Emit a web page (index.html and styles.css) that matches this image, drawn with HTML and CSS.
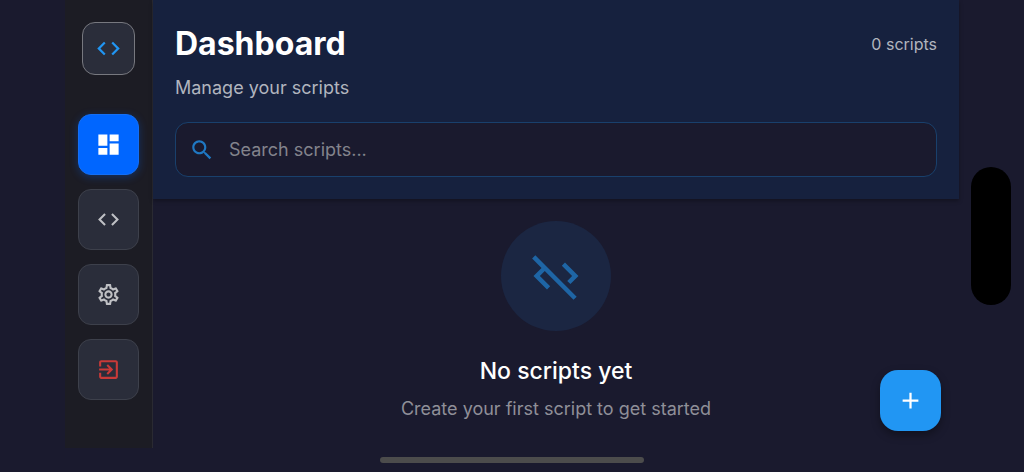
FILE: index.html
```html
<!DOCTYPE html>
<html lang="en">
<head>
<meta charset="utf-8">
<meta name="viewport" content="width=device-width, initial-scale=1">
<title>Dashboard</title>
<link rel="stylesheet" href="styles.css">
</head>
<body>
<div class="app">
  <aside class="sidebar">
    <div class="logo">
      <svg class="icon icon-large" viewBox="0 0 24 24" aria-hidden="true"><path d="M9.4 16.6L4.8 12l4.6-4.6L8 6l-6 6 6 6 1.4-1.4zm5.2 0l4.6-4.6-4.6-4.6L16 6l6 6-6 6-1.4-1.4z"/></svg>
    </div>
    <nav class="nav">
      <button class="nav-button active" type="button" aria-label="Dashboard">
        <svg class="icon icon-large" viewBox="0 0 24 24" aria-hidden="true"><path d="M3 13h8V3H3v10zm0 8h8v-6H3v6zm10 0h8V11h-8v10zm0-18v6h8V3h-8z"/></svg>
      </button>
      <button class="nav-button" type="button" aria-label="Scripts">
        <svg class="icon" viewBox="0 0 24 24" aria-hidden="true"><path d="M9.4 16.6L4.8 12l4.6-4.6L8 6l-6 6 6 6 1.4-1.4zm5.2 0l4.6-4.6-4.6-4.6L16 6l6 6-6 6-1.4-1.4z"/></svg>
      </button>
      <button class="nav-button" type="button" aria-label="Settings">
        <svg class="icon" viewBox="0 0 24 24" aria-hidden="true"><path d="M19.43 12.98c.04-.32.07-.64.07-.98 0-.34-.03-.66-.07-.98l2.11-1.65c.19-.15.24-.42.12-.64l-2-3.46c-.09-.16-.26-.25-.44-.25-.06 0-.12.01-.17.03l-2.49 1c-.52-.4-1.08-.73-1.69-.98l-.38-2.65C14.46 2.18 14.25 2 14 2h-4c-.25 0-.46.18-.49.42l-.38 2.65c-.61.25-1.17.59-1.69.98l-2.49-1c-.06-.02-.12-.03-.18-.03-.17 0-.34.09-.43.25l-2 3.46c-.13.22-.07.49.12.64l2.11 1.65c-.04.32-.07.65-.07.98s.03.66.07.98l-2.11 1.65c-.19.15-.24.42-.12.64l2 3.46c.09.16.26.25.44.25.06 0 .12-.01.17-.03l2.49-1c.52.4 1.08.73 1.69.98l.38 2.65c.03.24.24.42.49.42h4c.25 0 .46-.18.49-.42l.38-2.65c.61-.25 1.17-.59 1.69-.98l2.49 1c.06.02.12.03.18.03.17 0 .34-.09.43-.25l2-3.46c.12-.22.07-.49-.12-.64l-2.11-1.65zm-1.98-1.71c.04.31.05.52.05.73 0 .21-.02.43-.05.73l-.14 1.13.89.7 1.08.84-.7 1.21-1.27-.51-1.04-.42-.9.68c-.43.32-.84.56-1.25.73l-1.06.43-.16 1.13-.2 1.35h-1.4l-.19-1.35-.16-1.13-1.06-.43c-.43-.18-.83-.41-1.23-.71l-.91-.7-1.06.43-1.27.51-.7-1.21 1.08-.84.89-.7-.14-1.13c-.03-.31-.05-.54-.05-.74s.02-.43.05-.73l.14-1.13-.89-.7-1.08-.84.7-1.21 1.27.51 1.04.42.9-.68c.43-.32.84-.56 1.25-.73l1.06-.43.16-1.13.2-1.35h1.39l.19 1.35.16 1.13 1.06.43c.43.18.83.41 1.23.71l.91.7 1.06-.43 1.27-.51.7 1.21-1.07.85-.89.7.14 1.13zM12 8c-2.21 0-4 1.79-4 4s1.79 4 4 4 4-1.79 4-4-1.79-4-4-4zm0 6c-1.1 0-2-.9-2-2s.9-2 2-2 2 .9 2 2-.9 2-2 2z"/></svg>
      </button>
      <button class="nav-button danger" type="button" aria-label="Sign out">
        <svg class="icon" viewBox="0 0 24 24" aria-hidden="true"><path d="M10.09 15.59L11.5 17l5-5-5-5-1.41 1.41L12.67 11H3v2h9.67l-2.58 2.59zM19 3H5c-1.11 0-2 .9-2 2v4h2V5h14v14H5v-4H3v4c0 1.1.89 2 2 2h14c1.1 0 2-.9 2-2V5c0-1.1-.9-2-2-2z"/></svg>
      </button>
    </nav>
  </aside>
  <main class="main">
    <header class="header">
      <div class="title-row">
        <h1 class="title">Dashboard</h1>
        <span class="count">0 scripts</span>
      </div>
      <p class="subtitle">Manage your scripts</p>
      <label class="search">
        <svg class="icon icon-search" viewBox="0 0 24 24" aria-hidden="true"><path d="M15.5 14h-.79l-.28-.27C15.41 12.59 16 11.11 16 9.5 16 5.91 13.09 3 9.5 3S3 5.91 3 9.5 5.91 16 9.5 16c1.61 0 3.09-.59 4.23-1.57l.27.28v.79l5 4.99L20.49 19l-4.99-5zm-6 0C7.01 14 5 11.99 5 9.5S7.01 5 9.5 5 14 7.01 14 9.5 11.99 14 9.5 14z"/></svg>
        <input class="search-input" type="text" placeholder="Search scripts..." aria-label="Search scripts">
      </label>
    </header>
    <section class="empty">
      <div class="empty-badge">
        <svg class="icon icon-empty" viewBox="0 0 24 24" aria-hidden="true"><path d="M19.17 12l-4.58-4.59L16 6l6 6-3.59 3.59L17 14.17 19.17 12zM1.39 4.22l4.19 4.19L2 12l6 6 1.41-1.41L4.83 12 7 9.83l12.78 12.78 1.41-1.41L2.81 2.81 1.39 4.22z"/></svg>
      </div>
      <h2 class="empty-title">No scripts yet</h2>
      <p class="empty-text">Create your first script to get started</p>
    </section>
    <button class="fab" type="button" aria-label="New script">
      <svg class="icon icon-large" viewBox="0 0 24 24" aria-hidden="true"><path d="M19 13h-6v6h-2v-6H5v-2h6V5h2v6h6v2z"/></svg>
    </button>
  </main>
</div>
<div class="camera"></div>
<div class="home-indicator"></div>
</body>
</html>
```
FILE: styles.css
```css
* {
  box-sizing: border-box;
}

body {
  margin: 0;
  background: #1a1a2e;
  color: #fff;
  font-family: Inter, "Liberation Sans", sans-serif;
}

h1, h2, p {
  margin: 0;
}

button {
  padding: 0;
  font: inherit;
  cursor: pointer;
}

.app {
  display: flex;
  min-height: 100vh;
  padding: 0 65px 24px;
}

.icon {
  display: block;
  width: 25px;
  height: 25px;
  fill: currentColor;
}

.icon-search {
  width: 26px;
  height: 26px;
}

.icon-large {
  width: 27px;
  height: 27px;
}

.icon-empty {
  width: 54px;
  height: 54px;
}

.sidebar {
  display: flex;
  flex-direction: column;
  align-items: center;
  gap: 39px;
  flex: 0 0 88px;
  padding: 22px 0;
  background: #1c1c24;
  border-right: 1px solid #2a2a32;
}

.logo {
  display: grid;
  place-items: center;
  width: 53px;
  height: 53px;
  background: #2a2d3a;
  border: 1px solid #77787f;
  border-radius: 13px;
  color: #2196f3;
}

.nav {
  display: grid;
  gap: 14px;
}

.nav-button {
  display: grid;
  place-items: center;
  width: 61px;
  height: 61px;
  background: #2a2d3a;
  border: 1px solid #3d404b;
  border-radius: 13px;
  color: #bfc0c4;
}

.nav-button.active {
  background: #0066ff;
  border-color: #146ff5;
  color: #fff;
  box-shadow: 0 2px 9px rgba(0, 102, 255, 0.3);
}

.nav-button.danger {
  color: #c93a38;
}

.main {
  position: relative;
  display: flex;
  flex-direction: column;
  flex: 1;
  min-width: 0;
}

.header {
  padding: 22px;
  background: #16213e;
  box-shadow: 0 2px 4px rgba(0, 0, 0, 0.3);
}

.title-row {
  display: flex;
  align-items: center;
  justify-content: space-between;
}

.title {
  font-size: 32px;
  line-height: 44px;
  font-weight: 700;
}

.count {
  color: #b1b5be;
  font-size: 16px;
  line-height: 20px;
}

.subtitle {
  margin-top: 10px;
  color: #b1b5be;
  font-size: 18px;
  line-height: 24px;
}

.search {
  display: flex;
  align-items: center;
  gap: 14px;
  height: 55px;
  margin-top: 22px;
  padding: 0 13px;
  background: #1a1a2e;
  border: 1px solid #19406c;
  border-radius: 13px;
  cursor: text;
}

.icon-search {
  flex: none;
  color: #1f78c3;
}

.search-input {
  flex: 1;
  min-width: 0;
  padding: 0;
  background: none;
  border: 0;
  outline: 0;
  color: #fff;
  font: inherit;
  font-size: 18px;
  line-height: 24px;
}

.search-input::placeholder {
  color: #83838c;
  opacity: 1;
}

.empty {
  display: flex;
  flex-direction: column;
  align-items: center;
  padding: 22px;
  text-align: center;
}

.empty-badge {
  display: grid;
  place-items: center;
  width: 110px;
  height: 110px;
  background: #1b2642;
  border-radius: 50%;
  color: #1e65a5;
}

.empty-title {
  margin-top: 24px;
  font-size: 23px;
  line-height: 32px;
  font-weight: 500;
}

.empty-text {
  margin-top: 10px;
  color: #8f8f98;
  font-size: 18px;
  line-height: 24px;
}

.fab {
  position: absolute;
  right: 18px;
  bottom: 17px;
  display: grid;
  place-items: center;
  width: 61px;
  height: 61px;
  background: #2196f3;
  border: 0;
  border-radius: 18px;
  color: #fff;
  box-shadow: 0 4px 9px rgba(0, 0, 0, 0.35);
}

.camera {
  position: fixed;
  top: 50%;
  right: 13px;
  width: 40px;
  height: 138px;
  margin-top: -69px;
  background: #000;
  border-radius: 20px;
}

.home-indicator {
  position: fixed;
  bottom: 9px;
  left: 50%;
  width: 264px;
  height: 6px;
  margin-left: -132px;
  background: #4c4c4c;
  border-radius: 3px;
}
```
